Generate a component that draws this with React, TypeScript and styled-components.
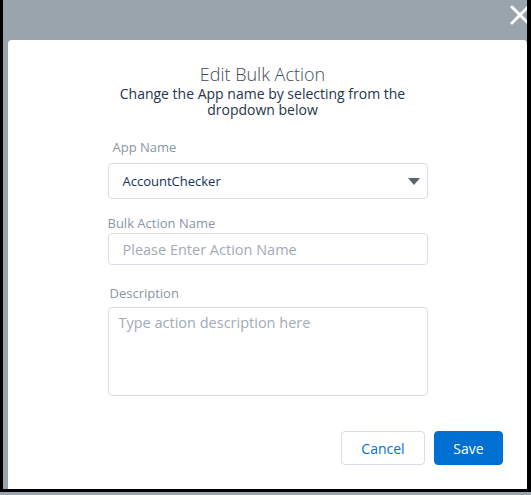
import React from "react";
import styled, { createGlobalStyle } from "styled-components";

const Global = createGlobalStyle`
  html, body { margin: 0; padding: 0; background: #9aa4ad; }
  body { width: 531px; height: 495px; overflow: hidden; font-family: "Open Sans", "Liberation Sans", sans-serif; }
`;

const Frame = styled.div`
  width: 531px;
  height: 492px;
  box-sizing: border-box;
  border-left: 3px solid #000;
  border-right: 4px solid #000;
  border-bottom: 3px solid #000;
  background: #9aa4ad;
  position: relative;
  overflow: hidden;
  display: flex;
  flex-direction: column;
  padding: 40px 0 0 5px;
`;

const CloseButton = styled.button`
  position: absolute;
  top: 4px;
  right: -4px;
  width: 22px;
  height: 22px;
  padding: 0;
  border: 0;
  background: transparent;
  cursor: pointer;
  display: flex;
`;

const Modal = styled.div`
  flex: 1;
  background: #fff;
  border-radius: 4px 4px 0 0;
  display: flex;
  flex-direction: column;
  align-items: center;
`;

const Header = styled.div`
  display: flex;
  flex-direction: column;
  align-items: center;
  padding-top: 23px;
  margin-right: 10px;
`;

const Title = styled.h2`
  margin: 0 0 1px;
  font-size: 18px;
  font-weight: 300;
  line-height: 22px;
  color: #3e4a58;
`;

const Subtitle = styled.p`
  margin: 0;
  width: 300px;
  text-align: center;
  font-size: 14px;
  line-height: 16px;
  color: #26354a;
`;

const Form = styled.div`
  width: 320px;
  display: flex;
  flex-direction: column;
  padding-top: 20px;
`;

const Label = styled.label<{ $indent?: number; $gap?: number }>`
  display: block;
  font-size: 13px;
  line-height: 18px;
  color: #8a96a3;
  padding-left: ${(p) => p.$indent ?? 0}px;
  margin-bottom: ${(p) => p.$gap ?? 6}px;
`;

const Field = styled.div<{ $mb: number }>`
  display: flex;
  flex-direction: column;
  margin-bottom: ${(p) => p.$mb}px;
`;

const SelectBox = styled.div`
  height: 36px;
  box-sizing: border-box;
  border: 1px solid #d8dde6;
  border-radius: 4px;
  display: flex;
  align-items: center;
  justify-content: space-between;
  padding: 0 7px 0 14px;
  font-size: 13px;
  color: #16325c;
`;

const Caret = styled.span`
  width: 0;
  height: 0;
  border-left: 6px solid transparent;
  border-right: 6px solid transparent;
  border-top: 7px solid #5a6470;
`;

const Input = styled.input`
  height: 32px;
  box-sizing: border-box;
  border: 1px solid #d8dde6;
  border-radius: 4px;
  padding: 0 14px;
  font-family: inherit;
  font-size: 14.5px;
  color: #16325c;
  outline: none;
  &::placeholder { color: #a2abb6; }
`;

const TextArea = styled.textarea`
  height: 89px;
  box-sizing: border-box;
  border: 1px solid #d8dde6;
  border-radius: 4px;
  padding: 5px 10px;
  font-family: inherit;
  font-size: 14.5px;
  line-height: 20px;
  color: #16325c;
  resize: none;
  outline: none;
  &::placeholder { color: #a2abb6; }
`;

const Footer = styled.div`
  align-self: stretch;
  display: flex;
  justify-content: flex-end;
  gap: 9px;
  padding: 35px 24px 0 0;
`;

const Button = styled.button<{ $primary?: boolean }>`
  height: 34px;
  box-sizing: border-box;
  border-radius: 4px;
  font-family: inherit;
  font-size: 14px;
  padding: 0;
  width: ${(p) => (p.$primary ? 69 : 84)}px;
  border: 1px solid ${(p) => (p.$primary ? "#0070d2" : "#d8dde6")};
  background: ${(p) => (p.$primary ? "#0070d2" : "#fff")};
  color: ${(p) => (p.$primary ? "#fff" : "#0070d2")};
  cursor: pointer;
`;

export default function App() {
  return (
    <>
      <Global />
      <Frame>
        <CloseButton aria-label="Close">
          <svg width="22" height="22" viewBox="0 0 22 22">
            <path d="M3 3 L19 19 M19 3 L3 19" stroke="#fff" strokeWidth="3" strokeLinecap="round" />
          </svg>
        </CloseButton>
        <Modal>
          <Header>
            <Title>Edit Bulk Action</Title>
            <Subtitle>Change the App name by selecting from the dropdown below</Subtitle>
          </Header>
          <Form>
            <Field $mb={15}>
              <Label $indent={5} $gap={7}>App Name</Label>
              <SelectBox>
                <span>AccountChecker</span>
                <Caret />
              </SelectBox>
            </Field>
            <Field $mb={19}>
              <Label $gap={1}>Bulk Action Name</Label>
              <Input placeholder="Please Enter Action Name" />
            </Field>
            <Field $mb={0}>
              <Label $indent={2} $gap={5}>Description</Label>
              <TextArea placeholder="Type action description here" />
            </Field>
          </Form>
          <Footer>
            <Button>Cancel</Button>
            <Button $primary>Save</Button>
          </Footer>
        </Modal>
      </Frame>
    </>
  );
}
